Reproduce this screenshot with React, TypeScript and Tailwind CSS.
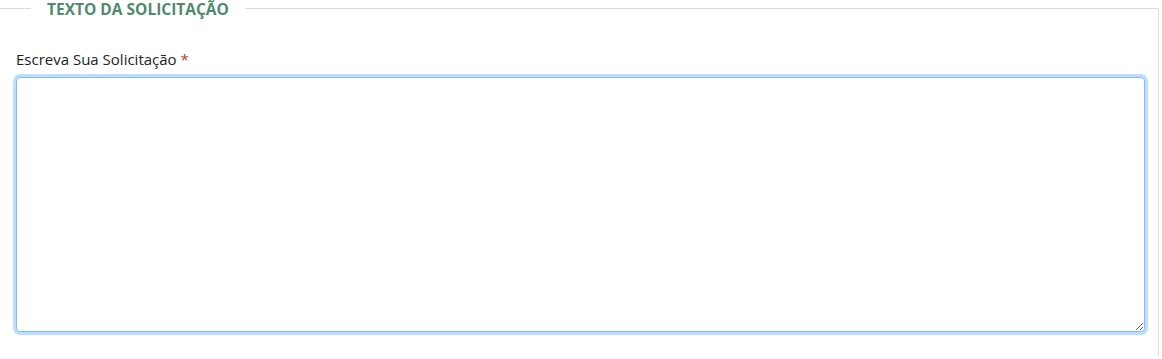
import React from "react";

export default function App() {
  return (
    <div className="h-[359px] w-[1162px] bg-white pr-[3px]" style={{ fontFamily: '"Segoe UI", "Open Sans", "Noto Sans", sans-serif' }}>
      <fieldset className="-mt-[1px] border-t border-r border-[#dcdcdc] pl-[16px] pr-[13px] pt-[31px] pb-6">
        <legend className="ml-[15px] px-[16px] pt-[2px] text-[15.5px] font-bold uppercase leading-[16px] text-[#4f8a6d]">
          Texto da Solicitação
        </legend>
        <label className="mb-[7px] block text-[15px] leading-[22px] text-[#222]">
          Escreva Sua Solicitação <span className="text-[#c0392b]">*</span>
        </label>
        <textarea
          autoFocus
          className="block h-[255px] w-full resize-y rounded-[4px] border border-[#80bdff] bg-white px-3 py-2 text-[14px] text-[#333] shadow-[0_0_0_3px_rgba(0,123,255,0.25)] outline-none"
        />
      </fieldset>
    </div>
  );
}
